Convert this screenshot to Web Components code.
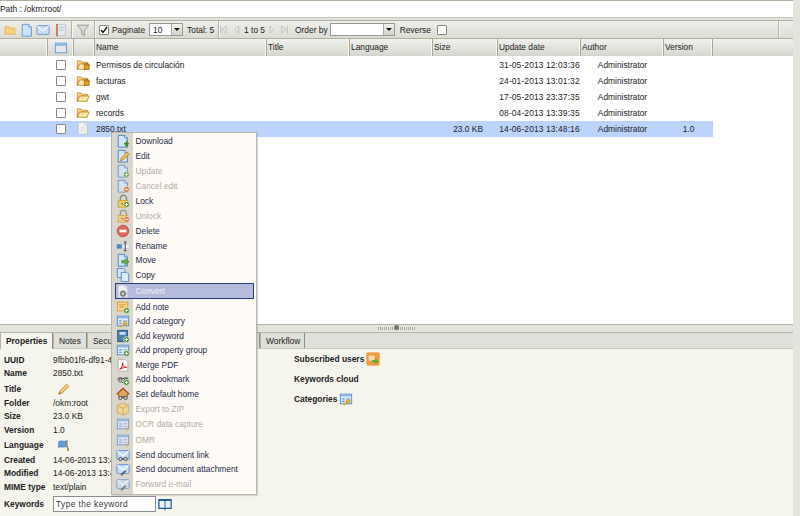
<!DOCTYPE html>
<html>
<head>
<meta charset="utf-8">
<title>OpenKM</title>
<style>
  html, body { margin: 0; height: 100%; }
  body { background: #e4e4de; font: 8.4px "Liberation Sans", Arial, sans-serif; color: #222; overflow: hidden; }
</style>
</head>
<body>
<okm-app></okm-app>

<script>
// icon bits, all on a 16x16 box
const doc = (fill = '#d4e5f9', line = '#3d7cc2') =>
  `<path d="M2.5 1.5h7.5l3 3v10.5h-10.5z" fill="${fill}" stroke="${line}"/><path d="M10 1.5v3h3" fill="#f4f8fd" stroke="${line}"/>`;
const plus = '<circle cx="12" cy="12" r="3.4" fill="#4e9a2e" stroke="#fff" stroke-width=".6"/><path d="M10.2 12h3.6M12 10.2v3.6" stroke="#fff" stroke-width="1.1"/>';
const minus = '<circle cx="12" cy="12" r="3.4" fill="#e0601c" stroke="#fff" stroke-width=".6"/><path d="M10.2 12h3.6" stroke="#fff" stroke-width="1.2"/>';
const lock = '<path d="M5 8V5a3.5 3.5 0 0 1 7 0v3" fill="none" stroke="#8c8c84" stroke-width="1.6"/><rect x="2.5" y="7.5" width="11" height="7.5" fill="#f3cf6b" stroke="#c69a2e"/><circle cx="7" cy="11" r="1" fill="#8a6a1a"/>';
const form = '<rect x="1.5" y="2.5" width="13" height="11" fill="#dce9f8" stroke="#4a84c4"/><path d="M2 3h12v2H2z" fill="#8fb6e2"/><path d="M3.5 7h3v1.5h-3zM3.5 10h3v1.5h-3z" fill="#6d9bd2"/><path d="M8 7.7h5M8 10.7h5" stroke="#8fb0d6"/>';
const key = '<circle cx="10.5" cy="10.5" r="2" fill="#f0c040" stroke="#b98a1c"/><path d="M9 12l-4 3" stroke="#d9a52c" stroke-width="1.8"/>';
const binoc = '<circle cx="5" cy="12.500" r="1.900" fill="#cfcfcf" stroke="#444"/><circle cx="11" cy="12.500" r="1.900" fill="#cfcfcf" stroke="#444"/><path d="M7 12h2" stroke="#444" stroke-width="1.4"/>';
const mail = '<rect x="1" y="3" width="14" height="10" rx="1" fill="#c9ddf5" stroke="#5a8ccb"/><path d="M1.5 3.5L8 9l6.5-5.500" fill="none" stroke="#fff" stroke-width="1.2"/>';
const clip = '<path d="M6 15l5-5" stroke="#333" stroke-width="2"/><path d="M6 15l5-5" stroke="#bbb" stroke-width=".7"/>';
const folder = '<path d="M1.500 4.500h4l1.500 1.500h6v2H4L1.500 14z" fill="#f7dc9a" stroke="#c08a26"/><path d="M4 8h11l-2.500 6H1.500z" fill="#fbe7b0" stroke="#c08a26"/>';

const ICONS = {
  download: doc() + '<path d="M12 7.500v4M9.500 10.500h5L12 14.500z" fill="#4e9a2e" stroke="#3c7f22"/>',
  edit: doc() + '<path d="M5 14l1-3.500 6.500-7 2.500 2.500-7 6.500z" fill="#f2c24a" stroke="#b8862a"/>',
  update: doc() + plus,
  cancel: doc() + minus,
  lock: lock + plus,
  unlock: lock + minus,
  delete: '<circle cx="8" cy="8" r="6.500" fill="#e2685e" stroke="#b8453c"/><path d="M4 6.500h8v3H4z" fill="#fff"/>',
  rename: '<rect x="1" y="6" width="6" height="5" fill="#4a84c4"/><rect x="7" y="6" width="8" height="5" fill="#eef2f8" stroke="#c4ccd8"/><path d="M9 3.500h3M9 13.500h3M10.500 3.500v10" stroke="#333"/>',
  move: doc() + '<path d="M6.500 8.500h4V6l4.500 4-4.500 4v-2.500h-4z" fill="#63ad3c" stroke="#3c7f22" stroke-width=".6"/>',
  copy: '<path d="M1.500 .5h7l2 2v8.500h-9z" fill="#d4e5f9" stroke="#4a84c4"/><path d="M6 5h6.500l2 2v8.500H6z" fill="#dcebfb" stroke="#4a84c4"/>',
  convert: doc('#f2f2f6', '#c8c8d8') + '<circle cx="8" cy="11" r="3" fill="#9a9a9a" stroke="#666" stroke-width="1.600" stroke-dasharray="1.300 .7"/><circle cx="8" cy="11" r="1" fill="#eee"/>',
  note: '<rect x="1.500" y="2.500" width="12" height="10" fill="#f8d98a" stroke="#d89a30"/><path d="M3.500 5.500h8M3.500 8h6" stroke="#d08a28"/>' + plus,
  category: form + key,
  keyword: '<rect x="2" y="1.500" width="11" height="13" fill="#4f7fb2" stroke="#234f82"/><rect x="4" y="3.500" width="7" height="3" fill="#cfe0f2"/>' + plus,
  group: form + plus,
  pdf: '<path d="M2.500 1.500h8l3 3v10.500h-11z" fill="#fff" stroke="#aaa"/><path d="M4 13c2-1 3.500-4 3.500-8 0 3 2 5.500 5 5.500-3 0-6 1-8.500 2.500z" fill="none" stroke="#d4281c" stroke-width="1.200"/>',
  bookmark: '<path d="M2 8.500a3 3 0 0 1 5-1h2a3 3 0 0 1 5 1" fill="none" stroke="#555" stroke-width="1.200"/>' + binoc.replace(/cy="12.500"/g, 'cy="9.500"') + plus,
  home: '<path d="M1 8l7-6.500L15 8h-2v3H3V8z" fill="#d9a860" stroke="#8a5a20"/><path d="M1 8l7-6.500L15 8" fill="none" stroke="#b0452a" stroke-width="1.200"/>' + binoc,
  zip: '<path d="M8 1l6.500 3v8L8 15l-6.500-3V4z" fill="#f4d488" stroke="#c89a3c"/><path d="M1.500 4L8 7l6.500-3M8 7v8" fill="none" stroke="#c89a3c"/>',
  ocr: form + '<circle cx="13.500" cy="13.500" r="1.500" fill="#e0902c"/>',
  link: mail + binoc,
  attach: mail + clip,
  filefolder: folder,
  lockedfolder: folder + '<rect x="9.500" y="9" width="5.500" height="5" fill="#e8a020" stroke="#a86c10"/><path d="M11 9V7.500h2.500V9" fill="none" stroke="#a86c10"/>',
  txt: doc('#f3f3f1', '#c4c4c0') + '<path d="M5 7.500h6M5 9.500h6M5 11.500h6" stroke="#dcdcd8"/>',
  barfolder: '<path d="M1.500 3.500h5l1.500 2h6.500v8h-13z" fill="#f6d27a" stroke="#e0a83c"/>',
  bardoc: doc('#cfe2f9', '#4b90d8'),
  barmail: mail,
  bardoc2: '<path d="M3 1.500h10v13H3z" fill="#e4ebf5" stroke="#b8c4d4"/><path d="M3.500 1v14" stroke="#c8502c" stroke-width="1.600"/><path d="M6 5h5M6 8h5" stroke="#9ab4d4"/>',
  filter: '<path d="M1.500 2.500h13L9.500 8.500v6l-3-2v-4z" fill="#dcdcd6" stroke="#8c8c86"/>',
  window: '<rect x="1.500" y="2.500" width="13" height="11" fill="#e4e6ea" stroke="#5a94d0"/><path d="M2 3h12v2.500H2z" fill="#8cb8e6"/>',
  pencil: '<path d="M2 14l1.500-4L11 2.500 13.500 5 6 12.500z" fill="#f4cb6a" stroke="#c08a2a"/><path d="M2 14l.8-2.500 1.700 1.700z" fill="#8a5a20"/>',
  flag: '<path d="M2 4c3-2 6 1 10-1l-1.500 7c-3 1.500-6-1-9 1z" fill="#5b9fe0" stroke="#3a78bc" stroke-width=".6"/><path d="M10 3l3 12" stroke="#a87a3c" stroke-width="1.800"/>',
  subscribed: '<rect x=".5" y=".5" width="15" height="15" rx="2" fill="#f09a3c" stroke="#f4b878"/><rect x="3" y="4" width="7" height="6" fill="#f8d9a8"/><path d="M7 9h3.500V7l4 3.500-4 3.500v-2H7z" fill="#63ad3c"/>',
  book: '<path d="M1 3h6.500l.5 1 .5-1H15v10H8.500L8 14l-.5-1H1z" fill="#e8f0fa" stroke="#1f5c98" stroke-width="1.400"/><path d="M8 4v9" stroke="#1f5c98"/><path d="M1 3h14v1.500H1z" fill="#1f5c98"/>',
  first: '<path d="M3 3v10" stroke="#9a9a94"/><path d="M13 3v10L6 8z" fill="#ececE8" stroke="#a4a49e"/>',
  prev: '<path d="M12 3v10L5 8z" fill="#ececE8" stroke="#a4a49e"/>',
  next: '<path d="M4 3v10l7-5z" fill="#ececE8" stroke="#a4a49e"/>',
  last: '<path d="M13 3v10" stroke="#9a9a94"/><path d="M3 3v10l7-5z" fill="#ececE8" stroke="#a4a49e"/>',
};
ICONS.omr = ICONS.ocr;
ICONS.forward = ICONS.attach;

class OkmIcon extends HTMLElement {
  connectedCallback() {
    const size = this.getAttribute('size') || 14;
    const w = this.getAttribute('w') || size;
    this.attachShadow({ mode: 'open' }).innerHTML = `
      <style>
      :host { display: inline-flex; flex: none; width: ${w}px; height: ${size}px; }
      svg { display: block; width: 100%; height: 100%; }
      </style>
      <svg viewBox="0 0 16 16" preserveAspectRatio="none">${ICONS[this.getAttribute('name')] || ''}</svg>`;
  }
}

class OkmCheck extends HTMLElement {
  connectedCallback() {
    const on = this.hasAttribute('checked');
    this.attachShadow({ mode: 'open' }).innerHTML = `
      <style>
      :host { display: inline-flex; flex: none; box-sizing: border-box; width: 10px; height: 10px; background: #fff; border: 1px solid #8a8a84; border-radius: 1px; }
      svg { width: 100%; height: 100%; display: block; }
      </style>
      ${on ? '<svg viewBox="0 0 8 8"><path d="M1 4l2 2.500L7 1" fill="none" stroke="#111" stroke-width="1.300"/></svg>' : ''}`;
  }
}

class OkmSelect extends HTMLElement {
  connectedCallback() {
    this.attachShadow({ mode: 'open' }).innerHTML = `
      <style>
      :host { display: inline-flex; align-items: center; flex: none; box-sizing: border-box; height: 13px; background: #fff; border: 1px solid #9a9a94; padding-left: 3px; }
      .v { flex: 1; }
      .b { width: 10px; height: 11px; background: linear-gradient(#f2f2ee, #d2d2cc); border-left: 1px solid #aaa; display: flex; align-items: center; justify-content: center; }
      .b::after { content: ""; border: 3px solid transparent; border-top: 3px solid #111; border-bottom: 0; }
      </style>
      <span class="v"><slot></slot></span><span class="b"></span>`;
  }
}

class OkmPathBar extends HTMLElement {
  connectedCallback() {
    this.attachShadow({ mode: 'open' }).innerHTML = `
      <style>
      :host { display: block; height: 16px; margin-right: 7px; background: #fff; border-top: 1px solid #b0b0a0; border-bottom: 1px solid #c4c4b8; line-height: 17px; }
      </style>
      <slot></slot>`;
  }
}

class OkmToolbar extends HTMLElement {
  connectedCallback() {
    const sep = (l, r) => `<i class="sep" style="margin:0 ${r}px 0 ${l}px"></i>`;
    this.attachShadow({ mode: 'open' }).innerHTML = `
      <style>
      :host { display: flex; align-items: center; box-sizing: border-box; height: 18px; margin: 2px 7px 0 0; border-top: 1px solid #b0b0a0; background: linear-gradient(#efefeb, #dcdcd5); white-space: nowrap; position: relative; }
      .sep { width: 1px; align-self: stretch; background: #b4b4a8; box-shadow: 1px 0 #f6f6f2; flex: none; }
      okm-icon { opacity: .95; }
      .pg { opacity: .85; }
      .end { flex: 1; align-self: stretch; display: flex; justify-content: flex-end; }
      </style>
      <okm-icon name="barfolder" size="12" style="margin-left:4px"></okm-icon>
      <okm-icon name="bardoc" size="14" style="margin-left:4px"></okm-icon>
      <okm-icon name="barmail" size="14" style="margin-left:2px"></okm-icon>
      <okm-icon name="bardoc2" size="14" style="margin-left:4px"></okm-icon>
      ${sep(3, 4)}
      <okm-icon name="filter" size="14"></okm-icon>
      ${sep(4, 4)}
      <okm-check checked></okm-check>
      <span style="margin-left:3px">Paginate</span>
      <okm-select style="width:34px;margin-left:4px">10</okm-select>
      <span style="margin-left:4px">Total: 5</span>
      ${sep(4, 0)}
      <okm-icon class="pg" name="first" size="11" w="9"></okm-icon>
      <okm-icon class="pg" name="prev" size="11" w="9" style="margin-left:4px"></okm-icon>
      <span style="margin-left:3px">1 to 5</span>
      <okm-icon class="pg" name="next" size="11" w="8" style="margin-left:3px"></okm-icon>
      <okm-icon class="pg" name="last" size="11" w="9" style="margin-left:4px"></okm-icon>
      <span style="margin-left:6px">Order by</span>
      <okm-select style="width:65px;margin-left:2px"></okm-select>
      <span style="margin-left:5px">Reverse</span>
      <okm-check style="margin-left:6px"></okm-check>
      <span class="end">${sep(0, 14)}</span>`;
  }
}

// columns: blank, check, icon, name, title, language, size, date, author, version, rest
const COLUMNS = '48px 26px 21px 172px 83px 83px 65px 83px 83px 49px 1fr';

class OkmFileTable extends HTMLElement {
  connectedCallback() {
    const heads = ['', '<okm-icon name="window" size="14"></okm-icon>', '', 'Name', 'Title', 'Language', 'Size', 'Update date', 'Author', 'Version', ''];
    this.attachShadow({ mode: 'open' }).innerHTML = `
      <style>
      :host { display: flex; flex-direction: column; flex: none; height: 287px; margin-right: 7px; background: #fff; border-bottom: 1px solid #b4b4a6; box-sizing: border-box; }
      .head { display: grid; grid-template-columns: ${COLUMNS}; height: 18px; background: linear-gradient(#f1f1ed, #d8d8d1); border-top: 1px solid #b0b0a0; border-bottom: 1px solid #d4d4cc; box-sizing: border-box; }
      .head div { border-right: 1px solid #a8a89a; box-shadow: inset -1px 0 #f7f7f3; padding-left: 1px; line-height: 17px; display: flex; align-items: center; }
      .head div:nth-child(2) { justify-content: center; }
      .head div:last-child { border: 0; box-shadow: none; }
      .rows { padding-top: 1px; }
      </style>
      <div class="head">${heads.map(h => `<div>${h}</div>`).join('')}</div>
      <div class="rows"><slot></slot></div>`;
  }
}

class OkmRow extends HTMLElement {
  connectedCallback() {
    const a = n => this.getAttribute(n) || '';
    this.attachShadow({ mode: 'open' }).innerHTML = `
      <style>
      :host { display: grid; grid-template-columns: ${COLUMNS}; height: 16px; align-items: center; }
      :host([selected]) { background: linear-gradient(#bcd4fb, #bcd4fb) no-repeat 0 0 / 713px 100%; }
      .c { display: flex; justify-content: center; padding-right: 1px; }
      .i { padding-left: 2px; }
      .n { padding-left: 1px; }
      .s { text-align: right; padding-right: 15px; }
      .m { text-align: center; white-space: nowrap; }
      .d { letter-spacing: .14px; }
      </style>
      <span></span>
      <span class="c"><okm-check></okm-check></span>
      <span class="i"><okm-icon name="${a('icon')}" size="14"></okm-icon></span>
      <span class="n"><slot></slot></span>
      <span></span><span></span>
      <span class="s">${a('size')}</span>
      <span class="m d">${a('date')}</span>
      <span class="m">${a('author')}</span>
      <span class="m">${a('version')}</span>
      <span></span>`;
  }
}

class OkmSplitter extends HTMLElement {
  connectedCallback() {
    this.attachShadow({ mode: 'open' }).innerHTML = `
      <style>
      :host { display: flex; justify-content: center; align-items: center; flex: none; height: 7px; padding-right: 7px; }
      .grip { width: 38px; height: 3px; background: repeating-linear-gradient(90deg, #a8a8a0 0 1px, #e8e8e2 1px 2px); position: relative; }
      .grip::after { content: ""; position: absolute; left: 16px; top: -2px; width: 5px; height: 5px; border-radius: 50%; background: #77776f; }
      </style>
      <div class="grip"></div>`;
  }
}

class OkmTabs extends HTMLElement {
  connectedCallback() {
    const tabs = [['Properties', 53, 1], ['Notes', 34], ['Security', 55], ['', 118], ['Workflow', 45]];
    this.attachShadow({ mode: 'open' }).innerHTML = `
      <style>
      :host { display: flex; flex: none; box-sizing: border-box; height: 17px; margin-right: 7px; background: #e0e0db; border-top: 1px solid #b4b4a6; border-bottom: 1px solid #c8c8bc; }
      .t { box-sizing: border-box; padding-left: 5px; line-height: 16px; border-right: 1px solid #8f8f86; border-left: 1px solid #b4b4a6; white-space: nowrap; overflow: hidden; }
      .t:first-child { border-left: 0; }
      .on { background: #f5f5ee; font-weight: bold; height: 16px; }
      </style>
      ${tabs.map(([t, w, on]) => `<div class="t${on ? ' on' : ''}" style="width:${w}px">${t}</div>`).join('')}`;
  }
}

class OkmProperties extends HTMLElement {
  connectedCallback() {
    const icon = (n, s = 14, m = 4) => `<okm-icon name="${n}" size="${s}" style="margin-left:${m}px"></okm-icon>`;
    const rows = [
      ['UUID', '9fbb01f6-df91-4', 14],
      ['Name', '2850.txt', 13.500],
      ['Title', icon('pencil'), 16],
      ['Folder', '/okm:root', 13.500],
      ['Size', '23.0 KB', 13.500],
      ['Version', '1.0', 13.500],
      ['Language', icon('flag'), 16.500],
      ['Created', '14-06-2013 13:48:16', 13.500],
      ['Modified', '14-06-2013 13:48:16', 13.500],
      ['MIME type', 'text/plain', 13.500],
    ];
    this.attachShadow({ mode: 'open' }).innerHTML = `
      <style>
      :host { display: grid; grid-template-columns: 290px 1fr; flex: 1; margin-right: 7px; background: #f5f5ee; padding: 4px 0 0 4px; min-height: 0; }
      .l { display: grid; grid-template-columns: 49px 1fr; align-content: start; align-items: center; }
      b { font-weight: bold; }
      .kw { height: 16px; display: flex; align-items: center; }
      input { box-sizing: border-box; width: 103px; height: 16px; border: 1px solid #8e8e88; background: #fff; padding: 0 2px; margin: 0; font: inherit; letter-spacing: .4px; color: #333; outline: 0; }
      .r { display: flex; flex-direction: column; align-items: flex-start; gap: 5.800px; margin-top: -1px; }
      .r div { display: flex; align-items: center; height: 14px; }
      </style>
      <div class="l">
        ${rows.map(([k, v, h]) => `<b style="height:${h}px;line-height:${h}px">${k}</b><span style="height:${h}px;line-height:${h}px;display:flex;align-items:center;white-space:nowrap">${v}</span>`).join('')}
        <b style="margin-top:2px">Keywords</b>
        <div class="kw" style="margin-top:2px"><input value="Type the keyword">${icon('book', 14, 2)}</div>
      </div>
      <div class="r">
        <div><b>Subscribed users</b>${icon('subscribed', 14, 2)}</div>
        <div><b>Keywords cloud</b></div>
        <div><b>Categories</b>${icon('category', 14, 2)}</div>
      </div>`;
  }
}

class OkmMenuItem extends HTMLElement {
  connectedCallback() {
    this.attachShadow({ mode: 'open' }).innerHTML = `
      <style>
      :host { display: flex; align-items: center; height: 14.500px; color: #1c2a48; white-space: nowrap; }
      :host([off]) { height: 15.500px; color: #aeaea6; }
      :host([off]) okm-icon { opacity: .75; }
      :host([hover]) { height: 17.500px; color: #eef0f6; }
      :host([hover]) .box { position: absolute; left: 3px; right: 2px; height: 16px; box-sizing: border-box; background: #b5bbdc; border: 1px solid #2e3c80; }
      .g { width: 22px; display: flex; justify-content: center; flex: none; position: relative; }
      .x { margin-left: 1.500px; position: relative; }
      </style>
      <span class="box"></span>
      <span class="g"><okm-icon name="${this.getAttribute('icon')}" size="14"></okm-icon></span>
      <span class="x"><slot></slot></span>`;
  }
}

class OkmContextMenu extends HTMLElement {
  connectedCallback() {
    this.attachShadow({ mode: 'open' }).innerHTML = `
      <style>
      :host { display: block; position: absolute; left: 111px; top: 132px; width: 146px; box-sizing: border-box; padding: 1px 0 2px; border: 1px solid #b8b6a8; background: linear-gradient(90deg, #d9d6ce 21px, #fffcf7 21px); box-shadow: 1px 1px 1px rgba(0,0,0,.12); }
      </style>
      <slot></slot>`;
  }
}

class OkmApp extends HTMLElement {
  connectedCallback() {
    this.attachShadow({ mode: 'open' }).innerHTML = `
      <style>
      :host { display: flex; flex-direction: column; height: 516px; position: relative; overflow: hidden; }
      </style>
      <okm-path-bar>Path : /okm:root/</okm-path-bar>
      <okm-toolbar></okm-toolbar>
      <okm-file-table>
        <okm-row icon="lockedfolder" date="31-05-2013 12:03:36" author="Administrator">Permisos de circulación</okm-row>
        <okm-row icon="lockedfolder" date="24-01-2013 13:01:32" author="Administrator">facturas</okm-row>
        <okm-row icon="filefolder" date="17-05-2013 23:37:35" author="Administrator">gwt</okm-row>
        <okm-row icon="filefolder" date="08-04-2013 13:39:35" author="Administrator">records</okm-row>
        <okm-row icon="txt" selected size="23.0 KB" date="14-06-2013 13:48:16" author="Administrator" version="1.0">2850.txt</okm-row>
      </okm-file-table>
      <okm-splitter></okm-splitter>
      <okm-tabs></okm-tabs>
      <okm-properties></okm-properties>
      <okm-context-menu>
        <okm-menu-item icon="download">Download</okm-menu-item>
        <okm-menu-item icon="edit">Edit</okm-menu-item>
        <okm-menu-item icon="update" off>Update</okm-menu-item>
        <okm-menu-item icon="cancel" off>Cancel edit</okm-menu-item>
        <okm-menu-item icon="lock">Lock</okm-menu-item>
        <okm-menu-item icon="unlock" off>Unlock</okm-menu-item>
        <okm-menu-item icon="delete">Delete</okm-menu-item>
        <okm-menu-item icon="rename">Rename</okm-menu-item>
        <okm-menu-item icon="move">Move</okm-menu-item>
        <okm-menu-item icon="copy">Copy</okm-menu-item>
        <okm-menu-item icon="convert" hover>Convert</okm-menu-item>
        <okm-menu-item icon="note">Add note</okm-menu-item>
        <okm-menu-item icon="category">Add category</okm-menu-item>
        <okm-menu-item icon="keyword">Add keyword</okm-menu-item>
        <okm-menu-item icon="group">Add property group</okm-menu-item>
        <okm-menu-item icon="pdf">Merge PDF</okm-menu-item>
        <okm-menu-item icon="bookmark">Add bookmark</okm-menu-item>
        <okm-menu-item icon="home">Set default home</okm-menu-item>
        <okm-menu-item icon="zip" off>Export to ZIP</okm-menu-item>
        <okm-menu-item icon="ocr" off>OCR data capture</okm-menu-item>
        <okm-menu-item icon="omr" off>OMR</okm-menu-item>
        <okm-menu-item icon="link">Send document link</okm-menu-item>
        <okm-menu-item icon="attach">Send document attachment</okm-menu-item>
        <okm-menu-item icon="forward" off>Forward e-mail</okm-menu-item>
      </okm-context-menu>`;
  }
}

customElements.define('okm-icon', OkmIcon);
customElements.define('okm-check', OkmCheck);
customElements.define('okm-select', OkmSelect);
customElements.define('okm-path-bar', OkmPathBar);
customElements.define('okm-toolbar', OkmToolbar);
customElements.define('okm-file-table', OkmFileTable);
customElements.define('okm-row', OkmRow);
customElements.define('okm-splitter', OkmSplitter);
customElements.define('okm-tabs', OkmTabs);
customElements.define('okm-properties', OkmProperties);
customElements.define('okm-menu-item', OkmMenuItem);
customElements.define('okm-context-menu', OkmContextMenu);
customElements.define('okm-app', OkmApp);
</script>
</body>
</html>
